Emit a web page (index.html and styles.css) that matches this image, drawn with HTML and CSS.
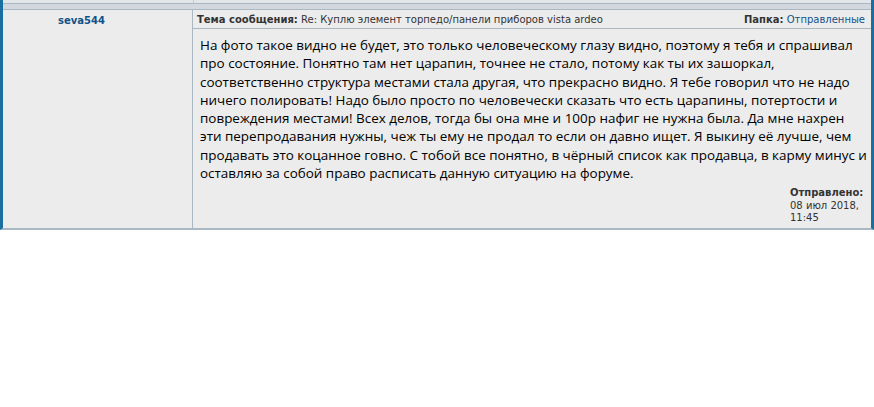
FILE: index.html
```html
<!DOCTYPE html>
<html>
<head>
<meta charset="utf-8">
<link rel="stylesheet" href="styles.css">
</head>
<body>
<div class="frame">
  <div class="strip strip-a"><div class="sa-l"></div><div class="sa-r"></div></div>
  <div class="strip strip-b"></div>
  <div class="post">
    <div class="author"><a class="username" href="#">seva544</a></div>
    <div class="main">
      <div class="head">
        <div class="subject"><b>Тема сообщения:</b> Re: Куплю элемент торпедо/панели приборов vista ardeo</div>
        <div class="folder"><b>Папка:</b> <a href="#">Отправленные</a></div>
      </div>
      <div class="content">На фото такое видно не будет, это только человеческому глазу видно, поэтому я тебя и спрашивал про состояние. Понятно там нет царапин, точнее не стало, потому как ты их зашоркал, соответственно структура местами стала другая, что прекрасно видно. Я тебе говорил что не надо ничего полировать! Надо было просто по человечески сказать что есть царапины, потертости и повреждения местами! Всех делов, тогда бы она мне и 100р нафиг не нужна была. Да мне нахрен эти перепродавания нужны, чеж ты ему не продал то если он давно ищет. Я выкину её лучше, чем продавать это коцанное говно. С тобой все понятно, в чёрный список как продавца, в карму минус и оставляю за собой право расписать данную ситуацию на форуме.</div>
      <div class="posted"><b>Отправлено:</b> 08 июл 2018, 11:45</div>
    </div>
  </div>
</div>
</body>
</html>
```
FILE: styles.css
```css
html, body { margin: 0; padding: 0; background: #fff; }
.frame {
  width: 868px;
  border-left: 3px solid #1a6fa0;
  border-right: 3px solid #1a6fa0;
  border-bottom: 2px solid #a9b8c2;
  font-family: "DejaVu Sans", Verdana, sans-serif;
}
.strip-a { height: 3px; background: #e3e6e9; display: flex; }
.sa-l { width: 190px; border-right: 1px solid #c4ccd2; }
.strip-b { height: 5px; background: #d2d8de; border-top: 1px solid #a9b8c2; border-bottom: 1px solid #a9b8c2; }
.post { display: flex; background: #ececec; }
.author {
  width: 190px; border-right: 1px solid #a9b8c2; text-align: center;
  padding: 5px 32px 0 0; box-sizing: border-box; font-size: 10px; line-height: 12px;
}
.username { color: #105289; font-weight: bold; font-size: 10px; text-decoration: none; }
.main { flex: 1; display: flex; flex-direction: column; }
.head {
  display: flex; justify-content: space-between;
  font-size: 10px; line-height: 12px; color: #333; padding: 4px 6px 2px 4px;
  border-bottom: 1px solid #a9b8c2;
}
.head b { color: #333; }
.head a { color: #105289; text-decoration: none; }
.content {
  font-family: "Open Sans", "Liberation Sans", sans-serif;
  font-size: 13.45px; line-height: 18.3px; color: #000;
  padding: 7px 4px 0 7px;
}
.posted {
  align-self: flex-end; width: 73px; margin: 5px 8px 3px 0;
  font-size: 10px; line-height: 12.5px; color: #333;
}
```
